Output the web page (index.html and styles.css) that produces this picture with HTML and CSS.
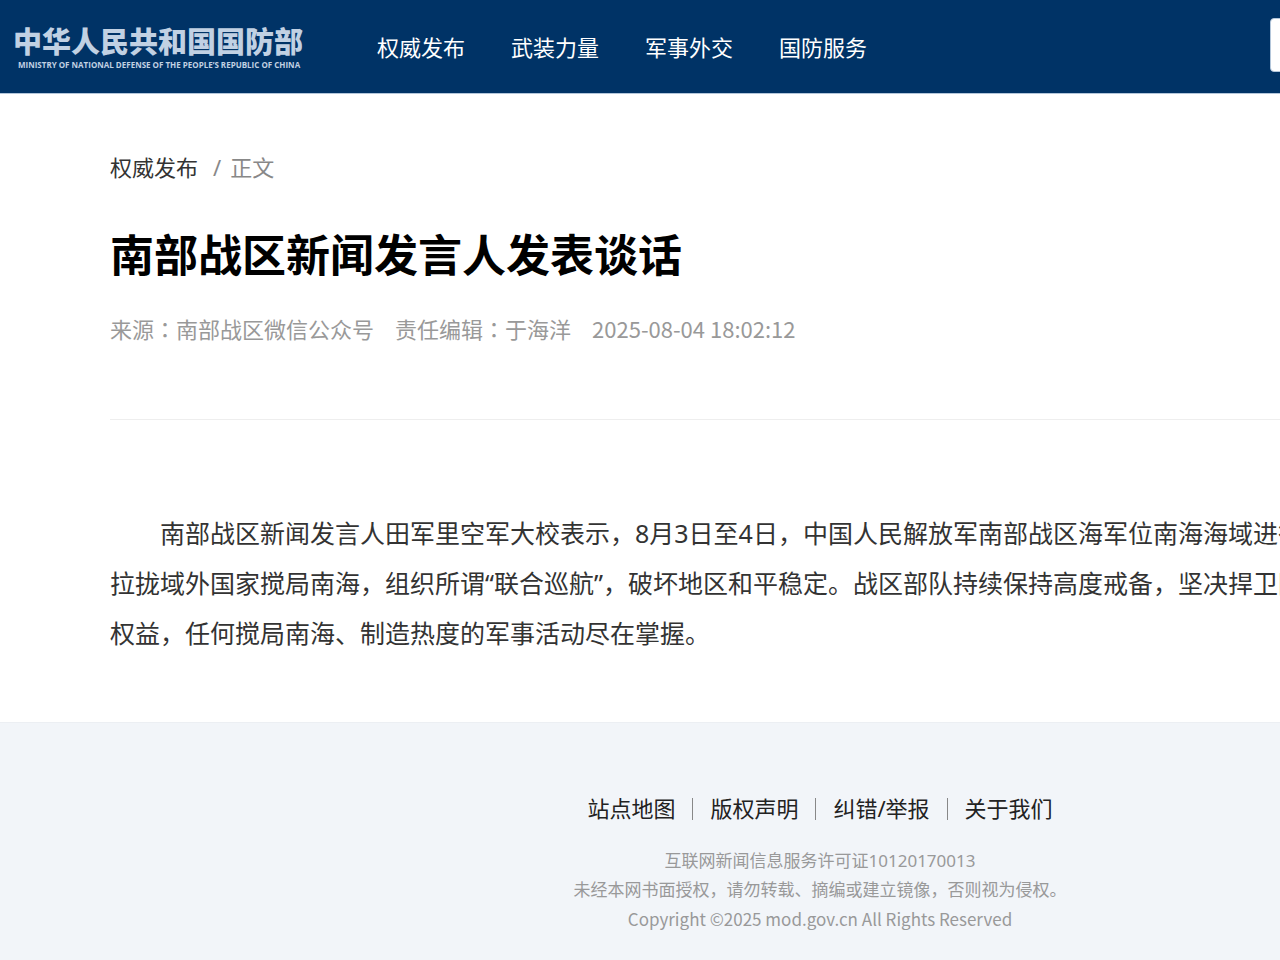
FILE: index.html
```html
<!DOCTYPE html>
<html lang="zh-CN">
<head>
<meta charset="utf-8">
<title>南部战区新闻发言人发表谈话</title>
<link rel="stylesheet" href="styles.css">
</head>
<body>
<div class="page">
  <header class="header">
    <a class="logo" href="#">
      <span class="logo-name">中华人民共和国国防部</span>
      <span class="logo-sub">MINISTRY OF NATIONAL DEFENSE OF THE PEOPLE’S REPUBLIC OF CHINA</span>
    </a>
    <nav class="nav">
      <a href="#">权威发布</a>
      <a href="#">武装力量</a>
      <a href="#">军事外交</a>
      <a href="#">国防服务</a>
    </nav>
    <form class="search"><input class="search-box" type="search" aria-label="搜索"></form>
  </header>
  <main class="article">
    <nav class="crumbs"><a href="#">权威发布</a><span>/</span><span>正文</span></nav>
    <h1 class="title">南部战区新闻发言人发表谈话</h1>
    <div class="meta">
      <span>来源<span class="colon" lang="zh-TW">：</span>南部战区微信公众号</span>
      <span>责任编辑<span class="colon" lang="zh-TW">：</span>于海洋</span>
      <time>2025-08-04 18:02:12</time>
    </div>
    <p class="content">南部战区新闻发言人田军里空军大校表示，8月3日至4日，中国人民解放军南部战区海军位南海海域进行<br>拉拢域外国家搅局南海，组织所谓“联合巡航”，破坏地区和平稳定。战区部队持续保持高度戒备，坚决捍卫国<br>权益，任何搅局南海、制造热度的军事活动尽在掌握。</p>
  </main>
  <footer class="footer">
    <nav class="links">
      <a href="#">站点地图</a>
      <a href="#">版权声明</a>
      <a href="#">纠错/举报</a>
      <a href="#">关于我们</a>
    </nav>
    <div class="legal">
      <p>互联网新闻信息服务许可证10120170013</p>
      <p>未经本网书面授权，请勿转载、摘编或建立镜像，否则视为侵权。</p>
      <p class="copyright">Copyright ©2025 mod.gov.cn All Rights Reserved</p>
    </div>
  </footer>
</div>
</body>
</html>
```
FILE: styles.css
```css
* { box-sizing: border-box; }
html, body { margin: 0; height: 100%; overflow: hidden; }
body {
  background: #fff;
  color: #333;
  font-family: "Noto Sans", "Noto Sans CJK SC", sans-serif;
  font-size: 22px;
  line-height: 32px;
}
a { color: inherit; text-decoration: none; }
p { margin: 0; }
/* The site keeps its desktop width on narrow windows */
.page { min-width: 1640px; min-height: 100%; display: flex; flex-direction: column; }

.header {
  display: flex;
  align-items: center;
  height: 94px;
  padding: 0 13px;
  background: #003366;
  border-bottom: 1px solid #b3c6da;
}
.logo { width: 294px; padding-top: 2px; color: #c1d1e3; white-space: nowrap; }
.logo-name {
  display: block;
  font-family: "Noto Sans CJK SC", sans-serif;
  font-weight: 900;
  font-size: 29px;
  line-height: 32px;
}
.logo-sub {
  display: block;
  margin-top: 2px;
  padding-left: 5px;
  font-family: "Open Sans", sans-serif;
  font-weight: 700;
  font-size: 8px;
  line-height: 14px;
}
.nav { display: flex; gap: 46px; margin-left: 70px; color: #fff; }
.search { margin-left: auto; padding-bottom: 3px; }
.search-box {
  display: block;
  width: 357px;
  height: 54px;
  border: 1px solid #b3c6da;
  border-radius: 4px;
  background: #fff;
  font: inherit;
}

.article { padding: 57px 110px 64px; }
.crumbs { display: flex; color: #888; }
.crumbs a { color: #333; margin-right: 15px; }
.crumbs span + span { margin-left: 9px; }
.title {
  margin: 40px 0 25px;
  color: #000;
  font-size: 44px;
  font-weight: 700;
  line-height: 64px;
}
.meta { display: flex; gap: 21px; color: #999; padding-bottom: 74px; border-bottom: 1px solid #eee; }
.meta time { font-family: "Noto Sans CJK SC", sans-serif; }
.colon { font-family: "Noto Sans CJK TC", sans-serif; }
.content {
  padding-top: 88px;
  font-size: 25px;
  line-height: 50px;
  text-indent: 2em;
  white-space: nowrap;
}

.footer {
  flex: 1;
  padding-top: 69px;
  background: #f2f5f9;
  border-top: 1px solid #eceff3;
  text-align: center;
}
.links { display: flex; justify-content: center; color: #222; }
.links a { display: flex; align-items: center; }
.links a + a::before { content: ""; width: 1px; height: 22px; margin: 2px 17px 0; background: #888; }
.legal { margin-top: 22px; color: #999; font-size: 17px; line-height: 29px; }
.copyright { font-family: "Noto Sans CJK SC", sans-serif; }
```
